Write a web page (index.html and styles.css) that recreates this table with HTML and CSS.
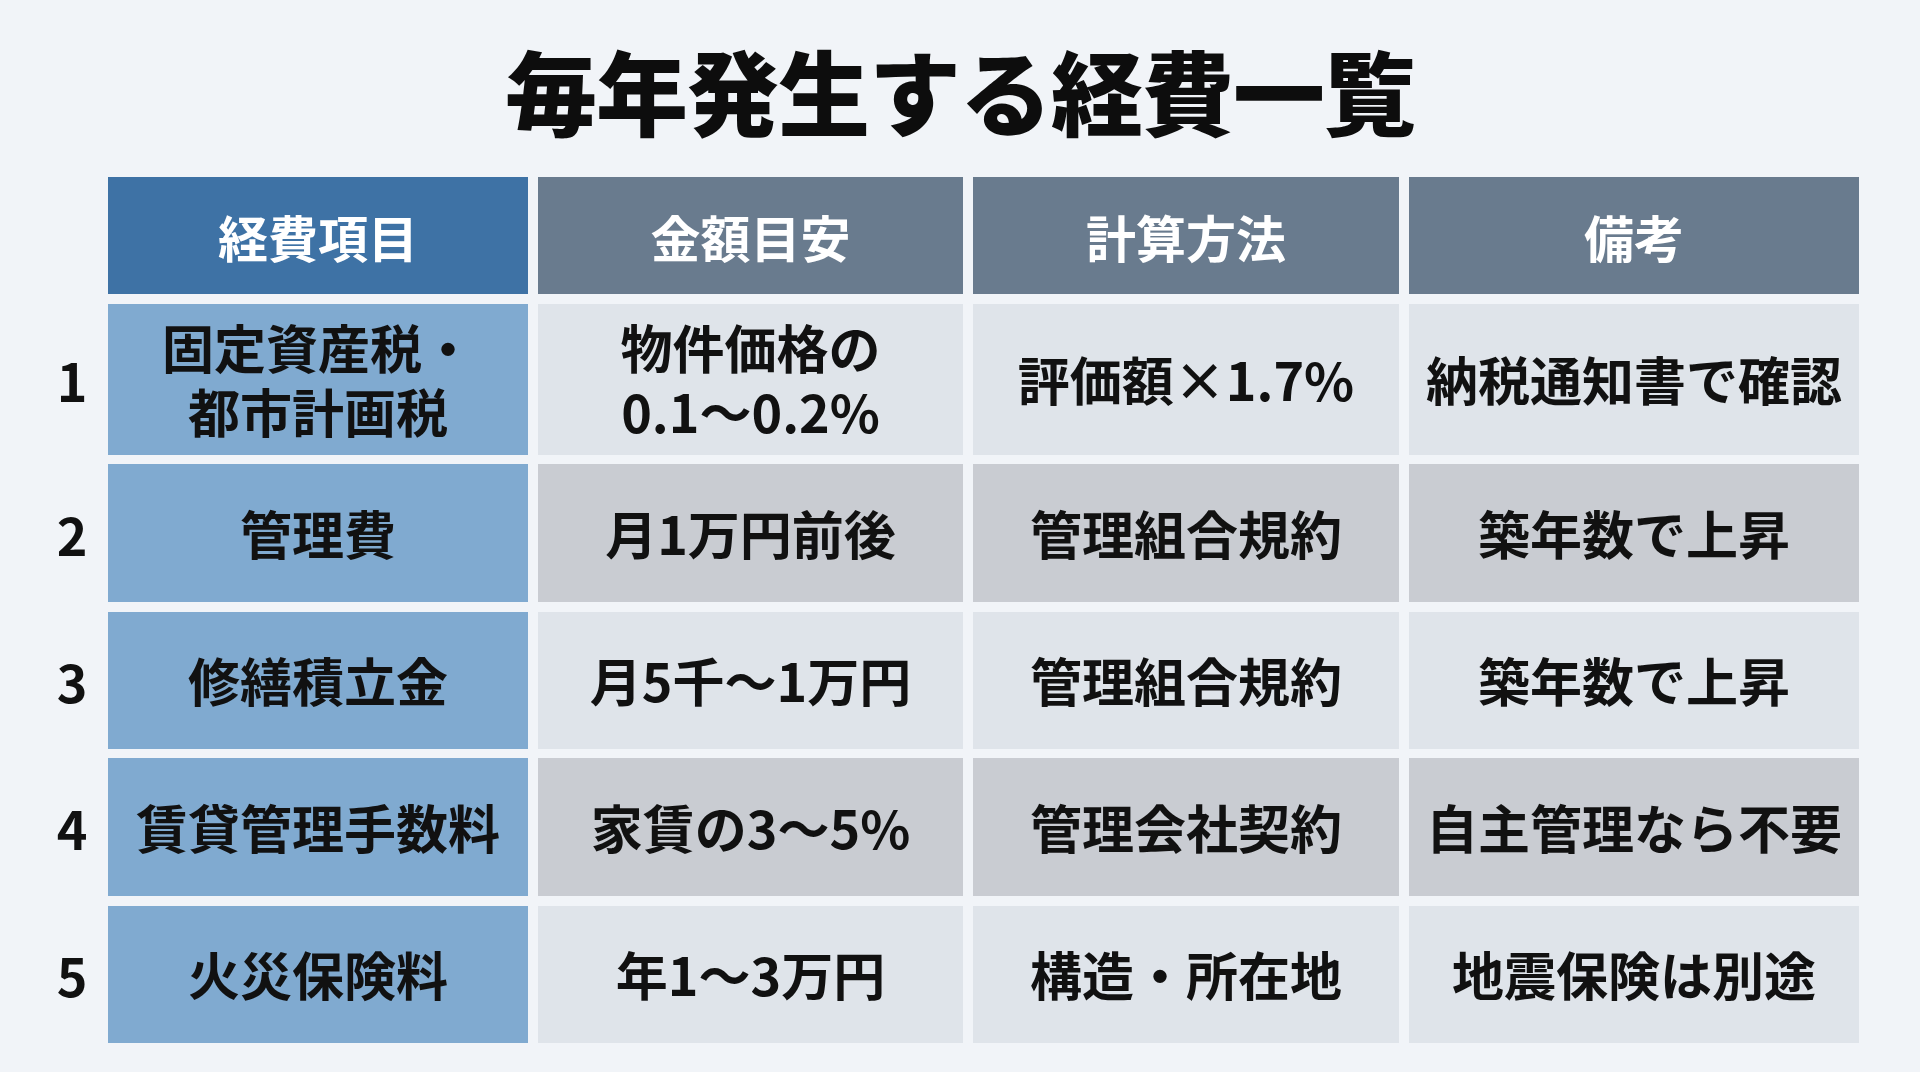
FILE: index.html
```html
<!DOCTYPE html>
<html lang="ja">
<head>
<meta charset="utf-8">
<title>毎年発生する経費一覧</title>
<link rel="stylesheet" href="styles.css">
</head>
<body>
<main class="page">
  <h1 class="title">毎年発生する経費一覧</h1>
  <div class="table">
    <div class="num"></div>
    <div class="th th-main">経費項目</div>
    <div class="th">金額目安</div>
    <div class="th">計算方法</div>
    <div class="th">備考</div>

    <div class="num">1</div>
    <div class="td td-main"><span class="ln">固定資産税・</span><span class="ln">都市計画税</span></div>
    <div class="td light"><span class="ln">物件価格の</span><span class="ln">0.1～0.2%</span></div>
    <div class="td light">評価額×1.7%</div>
    <div class="td light">納税通知書で確認</div>

    <div class="num">2</div>
    <div class="td td-main">管理費</div>
    <div class="td gray">月1万円前後</div>
    <div class="td gray">管理組合規約</div>
    <div class="td gray">築年数で上昇</div>

    <div class="num">3</div>
    <div class="td td-main">修繕積立金</div>
    <div class="td light">月5千～1万円</div>
    <div class="td light">管理組合規約</div>
    <div class="td light">築年数で上昇</div>

    <div class="num">4</div>
    <div class="td td-main">賃貸管理手数料</div>
    <div class="td gray">家賃の3～5%</div>
    <div class="td gray">管理会社契約</div>
    <div class="td gray">自主管理なら不要</div>

    <div class="num">5</div>
    <div class="td td-main">火災保険料</div>
    <div class="td light">年1～3万円</div>
    <div class="td light">構造・所在地</div>
    <div class="td light">地震保険は別途</div>
  </div>
</main>
</body>
</html>
```

FILE: styles.css
```css
html, body {
  margin: 0;
  padding: 0;
}
body {
  background: #f1f4f8;
  font-family: "Noto Sans CJK JP", "Noto Sans", sans-serif;
  color: #111;
  width: 1920px;
  height: 1072px;
  overflow: hidden;
}
.page {
  padding-top: 29px;
}
.title {
  margin: 0;
  text-align: center;
  font-size: 92px;
  line-height: 120px;
  font-weight: 900;
  color: #0d0d0d;
  letter-spacing: -1px;
}
.table {
  margin-top: 28px;
  margin-left: 46px;
  display: grid;
  grid-template-columns: 52px 420px 425px 426px 450px;
  grid-template-rows: 117px 151px 138px 137px 138px 137px;
  column-gap: 10px;
  row-gap: 9.5px;
}
.num {
  display: flex;
  align-items: center;
  justify-content: center;
  font-size: 52px;
  font-weight: 700;
  color: #111;
}
.th, .td {
  display: flex;
  flex-direction: column;
  align-items: center;
  justify-content: center;
  text-align: center;
  font-weight: 700;
}
.th {
  background: #697b8e;
  color: #fff;
  font-size: 50px;
}
.th-main {
  background: #3e72a5;
}
.td {
  font-size: 52px;
  line-height: 64px;
  color: #111;
}
.ln {
  display: block;
  height: 64px;
  overflow: visible;
}
.td-main {
  background: #80aad0;
}
.light {
  background: #dfe4ea;
}
.gray {
  background: #c9ccd2;
}
```
